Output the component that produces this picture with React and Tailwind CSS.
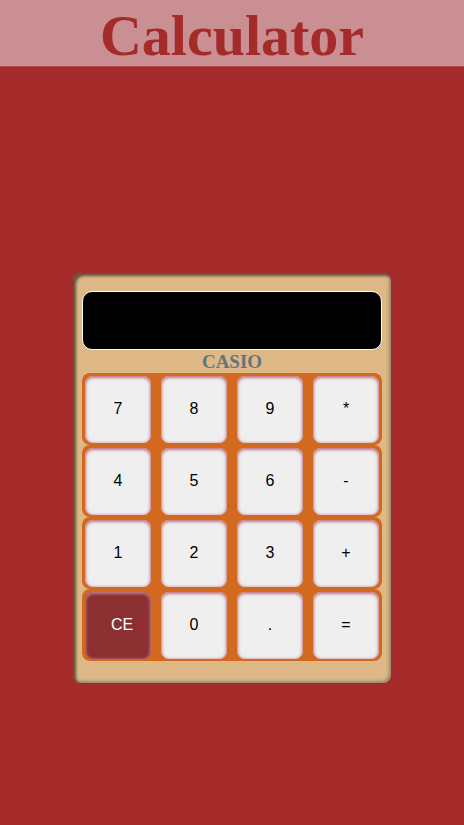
import React from 'react';

const rows = [
  ['7', '8', '9', '*'],
  ['4', '5', '6', '-'],
  ['1', '2', '3', '+'],
  ['CE', '0', '.', '='],
];

export default function App() {
  return (
    <div className="min-h-screen bg-[#a52a2a]">
      {/* header */}
      <header className="flex h-[67px] items-center justify-center bg-[#c98f92] border-b border-[#b14c4d]">
        <h1 className="text-[58px] font-bold leading-none text-[#a52a2a] font-['Liberation_Serif',serif] pt-[6px]">
          Calculator
        </h1>
      </header>

      <div className="flex justify-center pt-[206px]">
        <div className="w-[318px] h-[410px] rounded-[8px] bg-[#deb887] px-[9px] pt-[18px] shadow-[inset_3px_3px_3px_rgba(40,40,30,0.7),inset_-2px_-2px_3px_rgba(90,90,90,0.5)]">
          {/* display */}
          <div className="h-[59px] rounded-[10px] border border-white bg-black"></div>

          <div className="text-center text-[19px] font-bold leading-[23px] text-[#66747a] font-['Liberation_Serif',serif]">
            CASIO
          </div>

          {/* keypad */}
          <div className="flex flex-col">
            {rows.map((row, i) => (
              <div key={i} className="flex h-[72px] items-center justify-between rounded-[8px] bg-[#d2691e] px-[3px]">
                {row.map((k) => (
                  <button
                    key={k}
                    className={
                      k === 'CE'
                        ? "h-[67px] w-[66px] rounded-[8px] bg-[#8b2f31] pl-[8px] text-[16px] text-white font-['Liberation_Sans',sans-serif] shadow-[inset_0_1px_3px_1px_#c07a88]"
                        : "h-[67px] w-[66px] rounded-[8px] bg-[#efefef] text-[16px] text-black font-['Liberation_Sans',sans-serif] shadow-[inset_0_1px_3px_1px_#c07a88]"
                    }
                  >
                    {k}
                  </button>
                ))}
              </div>
            ))}
          </div>
        </div>
      </div>
    </div>
  );
}
